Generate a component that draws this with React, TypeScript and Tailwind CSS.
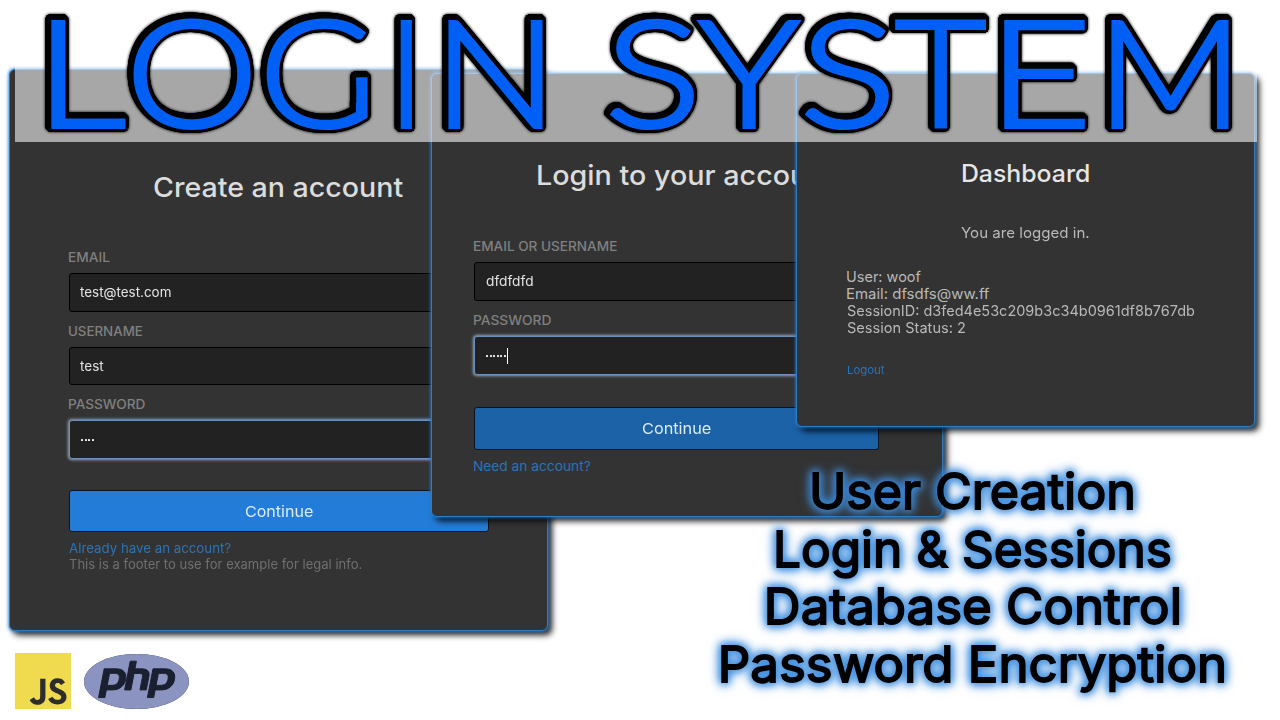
import { useLayoutEffect, useRef, useState } from "react";
import { SiJavascript, SiPhp } from "react-icons/si";

type FitProps = { text: string; width: number; className?: string };

/** Stretches a single line of text so that its ink is exactly `width` pixels wide. */
function Fit({ text, width, className = "" }: FitProps) {
  const ref = useRef<HTMLSpanElement>(null);
  const [t, setT] = useState({ scale: 1, shift: 0 });
  useLayoutEffect(() => {
    const el = ref.current;
    const ctx = document.createElement("canvas").getContext("2d");
    if (!el || !ctx) return;
    const cs = getComputedStyle(el);
    ctx.font = `${cs.fontWeight} ${cs.fontSize} ${cs.fontFamily}`;
    const m = ctx.measureText(text);
    const scale = width / (m.actualBoundingBoxLeft + m.actualBoundingBoxRight);
    setT({ scale, shift: m.actualBoundingBoxLeft * scale });
  }, [text, width]);
  return (
    <span className={`block shrink-0 whitespace-pre ${className}`} style={{ width }}>
      <span
        ref={ref}
        className="inline-block origin-left"
        style={{ transform: `translateX(${t.shift}px) scaleX(${t.scale})` }}
      >
        {text}
      </span>
    </span>
  );
}

const card =
  "absolute flex flex-col rounded-[6px] border border-[#2f7cc2] bg-[#333333] shadow-[0_0_3px_0.5px_rgba(36,128,220,0.75),4px_4px_6px_0_rgba(0,0,0,0.9)]";

const input = "flex items-center rounded-[3px] bg-[#222222] text-[13px] text-[#e4e4e4]";
const plain = "border border-black";
const focused = "border border-[#6a90bd] shadow-[0_0_3px_1px_rgba(160,175,200,0.9)]";
const label = "h-4 text-[13px] font-medium leading-4 text-[#808080]";
const button =
  "flex items-center justify-center rounded-[3px] border border-[#0b1420] pt-[2px] text-[15px] text-[#dcebfa]";

function Dots({ count }: { count: number }) {
  return (
    <span className="flex gap-[1.6px]">
      {Array.from({ length: count }, (_, i) => (
        <span key={i} className="h-[2px] w-[2px] rounded-[0.5px] bg-[#f0f0f0]" />
      ))}
    </span>
  );
}

function SignUp() {
  return (
    <section className={`${card} left-[9px] top-[69px] h-[562px] w-[539px] pl-[58.5px] pt-[100px]`}>
      <div className="w-[420.5px]">
        <h2 className="flex h-9 justify-center text-[27px] font-medium leading-9 text-[#dcdcdc]">
          <Fit text="Create an account" width={249} />
        </h2>
        <div className="mt-[43px] flex flex-col gap-[11.2px]">
          <div>
            <Fit text="EMAIL" width={40.5} className={label} />
            <div className={`${input} ${plain} mt-2 h-[38.5px] pl-[10.5px]`}>
              <Fit text="test@test.com" width={91} />
            </div>
          </div>
          <div>
            <Fit text="USERNAME" width={74} className={label} />
            <div className={`${input} ${plain} mt-2 h-[38.5px] pl-[10.5px] pt-px`}>
              <Fit text="test" width={23.5} />
            </div>
          </div>
          <div>
            <Fit text="PASSWORD" width={76} className={label} />
            <div className={`${input} ${focused} mt-2 h-[38.5px] pl-[11.5px]`}>
              <Dots count={4} />
            </div>
          </div>
        </div>
        <div className={`${button} mt-[31.5px] h-[42px] bg-[#237dd8]`}>
          <Fit text="Continue" width={67.5} />
        </div>
        <Fit
          text="Already have an account?"
          width={161.5}
          className="mt-[7.5px] h-4 text-[13px] leading-4 text-[#2b74b8]"
        />
        <Fit
          text="This is a footer to use for example for legal info."
          width={292.5}
          className="h-4 text-[13px] leading-4 text-[#707070]"
        />
      </div>
    </section>
  );
}

function Login() {
  return (
    <section className={`${card} left-[431px] top-[73px] h-[444px] w-[512px] pl-[42px] pt-[83px]`}>
      <div className="w-[405px]">
        <h2 className="ml-[63.5px] flex h-9 text-[27.5px] font-medium leading-9 text-[#dcdcdc]">
          <Fit text="Login to your account" width={296} />
        </h2>
        <div className="mt-[44.7px] flex flex-col gap-[11.2px]">
          <div>
            <Fit text="EMAIL OR USERNAME" width={143.5} className={label} />
            <div className={`${input} ${plain} mt-[8.3px] h-[39px] pl-[11px]`}>
              <Fit text="dfdfdfd" width={46.5} />
            </div>
          </div>
          <div>
            <Fit text="PASSWORD" width={77} className={label} />
            <div className={`${input} ${focused} mt-[8.3px] h-[39px] pl-[11px]`}>
              <Dots count={6} />
              <span className="ml-px h-4 w-px bg-white" />
            </div>
          </div>
        </div>
        <div className={`${button} mt-[31.9px] h-[42.5px] bg-[#1b62a7]`}>
          <Fit text="Continue" width={68.5} />
        </div>
        <Fit
          text="Need an account?"
          width={116}
          className="mt-[8.3px] h-4 text-[13px] leading-4 text-[#2b74b8]"
        />
      </div>
    </section>
  );
}

function Dashboard() {
  return (
    <section className={`${card} left-[796px] top-[73px] h-[354px] w-[459px] pl-[49.5px] pt-[83px]`}>
      <div className="w-[358px] text-[14.6px] leading-[17px] text-[#b9b9b9]">
        <h2 className="flex h-[34px] justify-center text-[24px] font-medium leading-[34px] text-[#e6e6e6]">
          <Fit text="Dashboard" width={127.5} />
        </h2>
        <p className="mt-[34px] flex justify-center">
          <Fit text="You are logged in." width={128.5} className="h-[17px]" />
        </p>
        <div className="mt-[27px]">
          <Fit text="User: woof" width={74.5} className="h-[17px]" />
          <Fit text="Email: dfsdfs@ww.ff" width={143} className="h-[17px]" />
          <Fit text="SessionID: d3fed4e53c209b3c34b0961df8b767db" width={348} className="h-[17px]" />
          <Fit text="Session Status: 2" width={118} className="h-[17px]" />
        </div>
        <Fit
          text="Logout"
          width={38}
          className="mt-[25px] h-4 text-[11px] leading-4 text-[#2b74b8]"
        />
      </div>
    </section>
  );
}

const letters = [
  { ch: "L", gap: 0, width: 71 },
  { ch: "O", gap: 11, width: 114.3 },
  { ch: "G", gap: 19.7, width: 97.7 },
  { ch: "I", gap: 36, width: 8.6 },
  { ch: "N", gap: 39.7, width: 90.3 },
  { ch: " ", gap: 0, width: 0 },
  { ch: "S", gap: 71.7, width: 80 },
  { ch: "Y", gap: 8, width: 98.7 },
  { ch: "S", gap: 8.3, width: 80 },
  { ch: "T", gap: 9.3, width: 87.7 },
  { ch: "E", gap: 21.7, width: 76.6 },
  { ch: "M", gap: 30.4, width: 113.6 },
];

// Leaves only the stem of the G, without its inner crossbar.
const stemOnly =
  "[clip-path:polygon(evenodd,-10px_-10px,115px_-10px,115px_160px,-10px_160px,-10px_-10px,40px_60px,87.8px_60px,87.8px_103px,40px_103px,40px_60px,-10px_-10px)]";

function Banner() {
  return (
    <header className="absolute left-[15px] top-0 h-[142px] w-[1242px] bg-white/57">
      <h1
        className="flex h-[142px] pl-[37.5px] text-[149px] font-light leading-[140px] text-[#0060f5] [-webkit-text-stroke:4px_#0060f5] [font-family:Lato,sans-serif] [filter:drop-shadow(1.8px_0_0_#000)_drop-shadow(-1.8px_0_0_#000)_drop-shadow(0_1.8px_0_#000)_drop-shadow(0_-1.8px_0_#000)_drop-shadow(1.3px_1.3px_0_#000)_drop-shadow(-1.3px_-1.3px_0_#000)_drop-shadow(1.3px_-1.3px_0_#000)_drop-shadow(-1.3px_1.3px_0_#000)_drop-shadow(0_0_1.5px_#000)]"
      >
        {letters.map((l, i) =>
          l.ch === " " ? (
            <span key={i} className="w-0 whitespace-pre"> </span>
          ) : (
            <span key={i} className={l.ch === "G" ? stemOnly : ""} style={{ marginLeft: l.gap }}>
              <Fit text={l.ch} width={l.width} />
            </span>
          ),
        )}
      </h1>
    </header>
  );
}

const features = [
  { text: "User Creation", width: 320 },
  { text: "Login & Sessions", width: 393 },
  { text: "Database Control", width: 411 },
  { text: "Password Encryption", width: 502 },
];

function Features() {
  return (
    <ul className="absolute left-[713px] top-[463px] flex w-[520px] flex-col items-center text-[49px] leading-[58px] text-black [-webkit-text-stroke:1.8px_#000] [filter:drop-shadow(0_0_4px_rgba(55,138,222,0.85))_drop-shadow(0_0_4px_rgba(55,138,222,0.75))_drop-shadow(0_0_3px_rgba(70,148,224,0.6))]">
      {features.map((f) => (
        <li key={f.text} className="h-[57.6px]">
          <Fit text={f.text} width={f.width} />
        </li>
      ))}
    </ul>
  );
}

function Logos() {
  return (
    <div className="absolute left-[15px] top-[653px] flex h-14 items-center gap-[13px]">
      <div className="size-14 bg-[#2d2e2b]">
        <SiJavascript className="size-14 text-[#f0db4f]" />
      </div>
      <div className="flex h-[55px] w-[105px] items-center justify-center overflow-hidden rounded-[50%] bg-[#1b2030]">
        <SiPhp className="size-[109px] shrink-0 stroke-[#1b2030] stroke-[0.22] text-[#8b93c1]" />
      </div>
    </div>
  );
}

export default function App() {
  return (
    <main className="relative h-[720px] w-[1280px] overflow-hidden bg-white [font-family:Inter,sans-serif]">
      <SignUp />
      <Login />
      <Dashboard />
      <Banner />
      <Features />
      <Logos />
    </main>
  );
}
